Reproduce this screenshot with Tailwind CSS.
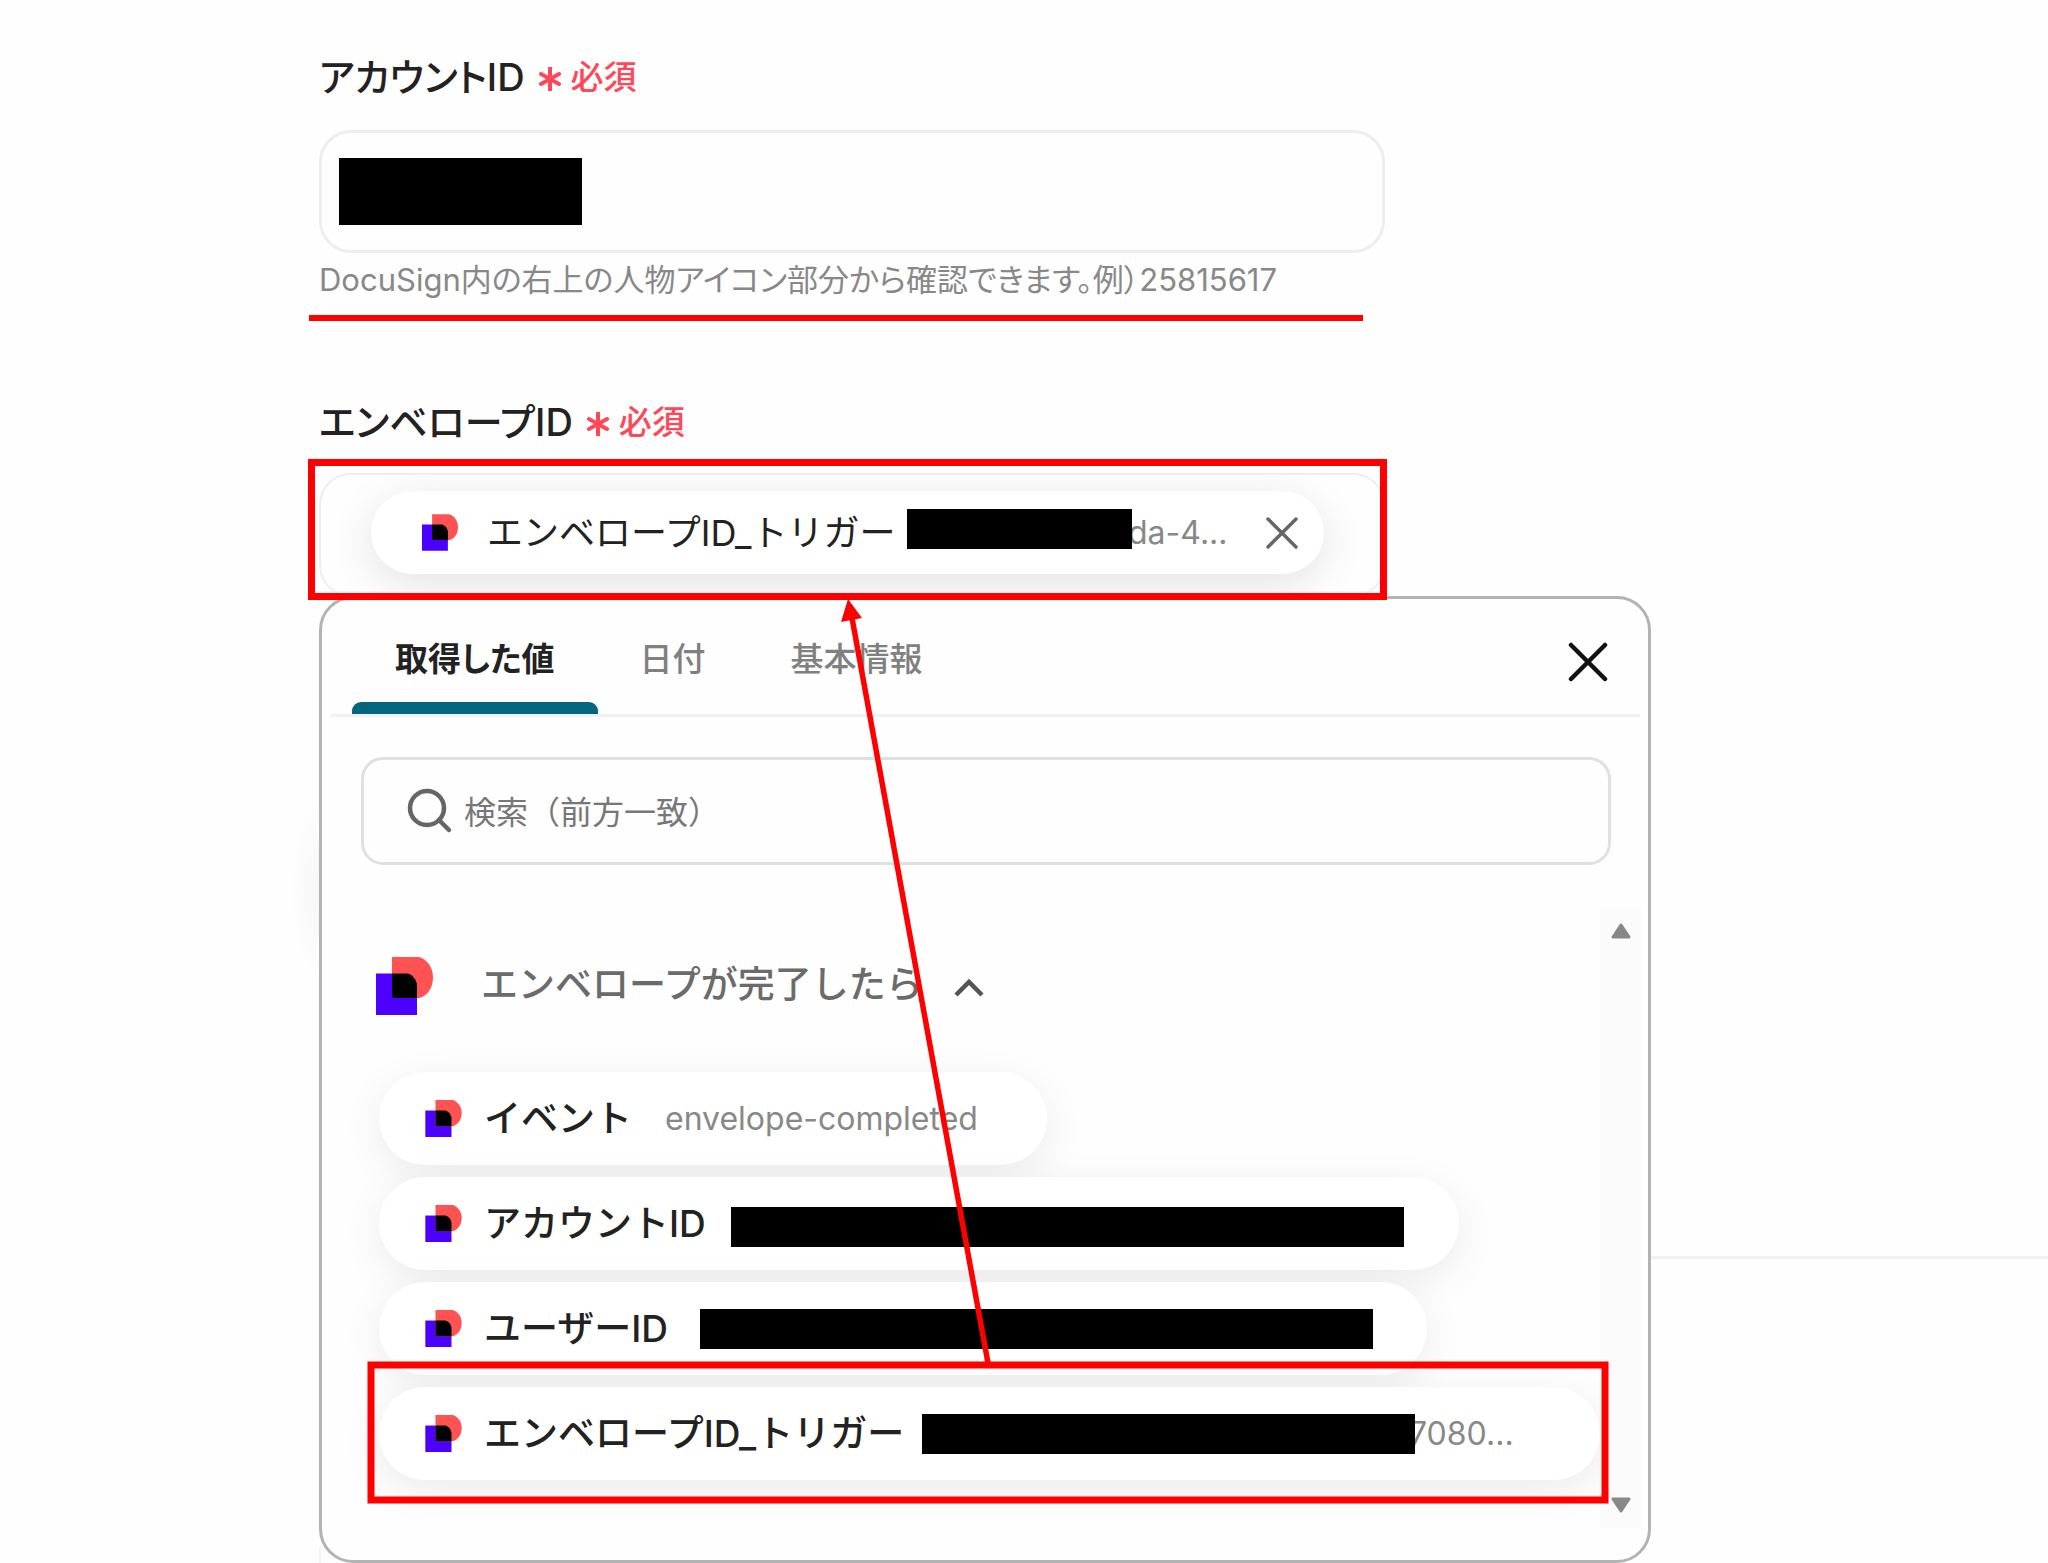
<!DOCTYPE html>
<html lang="ja">
<head>
<meta charset="utf-8">
<meta name="viewport" content="width=device-width, initial-scale=1">
<title>エンベロープID</title>
<script src="https://cdn.jsdelivr.net/npm/@tailwindcss/browser@4"></script>
</head>
<body class="bg-[#fefefe] font-['Inter','Noto_Sans_CJK_JP',sans-serif] text-[#222]">
<svg class="hidden" aria-hidden="true">
  <symbol id="logo" viewBox="0 0 57 58">
    <path fill="#4c00ff" d="M0 16.500h41V58H0z"/>
    <path fill="#ff5252" d="M16 0h27c9 3 14 11 14 20.500S52 39 43 41H16z"/>
    <path fill="#000" d="M16 16.500h16c5 2 8 6 9 11V41H16z"/>
  </symbol>
</svg>
<main class="relative overflow-hidden pt-[53px] pl-[319px]">
  <section class="max-w-[1066px]">
    <label for="account" class="flex items-center text-[38px] leading-[48px] font-medium [font-feature-settings:'palt']">アカウントID
      <svg class="mt-1 ml-[13px] size-6" viewBox="0 0 24 24" fill="none" stroke="#ff4757" stroke-width="4" stroke-linecap="round" aria-hidden="true"><path d="M12 1v22M3 7l18 10M21 7L3 17"/></svg>
      <span class="ml-[9px] text-[33px] text-[#ff4757]">必須</span>
    </label>
    <div class="mt-[29px] flex h-[123px] items-center rounded-[32px] border-3 border-[#eceef1] pl-[17px]">
      <span class="h-[67px] w-[243px] shrink-0 bg-black"></span>
      <input id="account" type="text" class="h-full min-w-0 flex-1 bg-transparent px-4 text-[32px] outline-none">
    </div>
    <p class="mt-[7px] text-[31px] leading-[40px] whitespace-nowrap text-[#888] [font-feature-settings:'palt']">DocuSign内の右上の人物アイコン部分から確認できます。例）25815617</p>
  </section>

  <section class="mt-[98px] max-w-[1066px]">
    <h2 class="flex items-center text-[38px] leading-[48px] font-medium [font-feature-settings:'palt']">エンベロープID
      <svg class="mt-1 ml-[13px] size-6" viewBox="0 0 24 24" fill="none" stroke="#ff4757" stroke-width="4" stroke-linecap="round" aria-hidden="true"><path d="M12 1v22M3 7l18 10M21 7L3 17"/></svg>
      <span class="ml-[9px] text-[33px] text-[#ff4757]">必須</span>
    </h2>
    <div class="mt-[27px] flex h-[124px] overflow-hidden rounded-[32px] border-2 border-[#eceef1] pt-4 pl-[50px]">
      <div class="flex h-[83px] w-[953px] items-center rounded-full bg-white pl-[51px] shadow-[0_10px_44px_rgba(0,0,0,0.11)]">
        <svg class="h-[37px] w-9 shrink-0"><use href="#logo"/></svg>
        <span class="ml-[29px] w-[420px] shrink-0 text-[36px] whitespace-nowrap">エンベロープID_トリガー</span>
        <span class="relative z-10 mb-2 h-10 w-[225px] shrink-0 bg-black"></span>
        <span class="-ml-1 text-[32px] text-[#888]">da-4...</span>
        <button type="button" aria-label="削除" class="mr-[26px] ml-auto"><svg class="size-8" viewBox="0 0 32 32" fill="none" stroke="#666" stroke-width="3.500" stroke-linecap="round"><path d="M2 2l28 28M30 2L2 30"/></svg></button>
      </div>
    </div>
  </section>

  <section class="relative -mt-px h-[967px] max-w-[1332px] rounded-[34px] border-3 border-[#b3b3b3] bg-[#fefefe]">
    <div class="mx-2 flex h-[118px] items-center border-b-3 border-[#f1f1f1] pl-[22px] text-[33px]" role="tablist">
      <button type="button" role="tab" aria-selected="true" class="relative h-[115px] px-[43px] pt-1.5 font-bold [font-feature-settings:'palt']">取得した値<span class="absolute inset-x-0 bottom-0 h-3 rounded-t-[9px] bg-[#05657e]"></span></button>
      <button type="button" role="tab" class="h-[115px] px-[42px] pt-1.5 font-medium text-[#808080]">日付</button>
      <button type="button" role="tab" class="h-[115px] px-[43px] pt-1.5 font-medium text-[#808080]">基本情報</button>
      <button type="button" aria-label="閉じる" class="mt-2.5 mr-8 ml-auto"><svg class="size-10" viewBox="0 0 40 40" fill="none" stroke="#111" stroke-width="4.500" stroke-linecap="round"><path d="M3 3l34 34M37 3L3 37"/></svg></button>
    </div>
    <label class="mt-10 mr-[37px] ml-[39px] flex h-[108px] items-center rounded-[22px] border-3 border-[#e0e0e0] pl-[43px]">
      <svg class="size-[46px] shrink-0" viewBox="0 0 46 46" fill="none" stroke="#666" stroke-width="4.500" stroke-linecap="round" aria-hidden="true"><circle cx="20" cy="20" r="17"/><path d="M32 32l10 10"/></svg>
      <input type="text" aria-label="検索" placeholder="検索（前方一致）" class="ml-[11px] h-full min-w-0 flex-1 bg-transparent pt-0.5 text-[32px] outline-none placeholder:text-[#777]">
    </label>
    <div class="mt-[43px] mr-[7px] flex h-[620px]">
      <div class="min-w-0 flex-1 overflow-hidden pt-[49px] pl-[54px]">
        <button type="button" class="flex h-[58px] items-center text-[37px] font-medium text-[#6b6b6b]">
          <svg class="h-[58px] w-[57px]"><use href="#logo"/></svg>
          <span class="mb-0.5 ml-12">エンベロープが完了したら</span>
          <svg class="mt-1 ml-[30px] h-5 w-8" viewBox="0 0 32 20" fill="none" stroke="#555" stroke-width="4.500" aria-hidden="true"><path d="M3 17L16 4l13 13"/></svg>
        </button>
        <ul class="mt-[57px] ml-[3px] flex flex-col items-start gap-3 text-[37px] font-medium [&>li]:flex [&>li]:h-[93px] [&>li]:items-center [&>li]:rounded-full [&>li]:bg-white [&>li]:pl-[46px] [&>li]:whitespace-nowrap [&>li]:shadow-[0_10px_40px_rgba(0,0,0,0.08)]">
          <li class="w-[668px]"><svg class="mr-[22px] size-[37px] shrink-0"><use href="#logo"/></svg><span class="w-[181px]">イベント</span><span class="text-[32px] font-normal text-[#888]">envelope-completed</span></li>
          <li class="w-[1080px]"><svg class="mr-[22px] size-[37px] shrink-0"><use href="#logo"/></svg><span class="w-[247px]">アカウントID</span><span class="mt-1.5 h-10 w-[673px] bg-black"></span></li>
          <li class="w-[1048px]"><svg class="mr-[22px] size-[37px] shrink-0"><use href="#logo"/></svg><span class="w-[216px]">ユーザーID</span><span class="h-10 w-[673px] bg-black"></span></li>
          <li class="w-[1221px]"><svg class="mr-[22px] size-[37px] shrink-0"><use href="#logo"/></svg><span class="w-[438px] shrink-0">エンベロープID_トリガー</span><span class="relative z-10 h-10 w-[493px] shrink-0 bg-black"></span><span class="-ml-1.5 text-[32px] font-normal text-[#888]">7080...</span></li>
        </ul>
      </div>
      <div class="flex w-[41px] flex-col items-center justify-between bg-[#fbfbfb] py-[15px]" aria-hidden="true">
        <svg class="h-4 w-5" viewBox="0 0 20 16"><path fill="#888" stroke="#888" stroke-width="3" stroke-linejoin="round" d="M10 2L2 14h16z"/></svg>
        <svg class="h-4 w-5" viewBox="0 0 20 16"><path fill="#888" stroke="#888" stroke-width="3" stroke-linejoin="round" d="M10 14L2 2h16z"/></svg>
      </div>
    </div>
  </section>
  <div class="absolute top-[1256px] right-0 left-[1651px] h-[3px] bg-[#f0f0f0]"></div>
  <div class="absolute bottom-0 left-[319px] h-4 w-0.5 bg-[#f3f3f3]"></div>
  <div class="absolute top-[800px] left-[291px] h-[180px] w-7 bg-radial-[at_100%_50%] from-black/3 to-transparent to-70%"></div>

  <svg class="pointer-events-none absolute inset-0 z-20 h-full w-full" fill="none" stroke="#f00" aria-hidden="true">
    <path stroke-width="6" d="M309 318h1054"/>
    <rect x="311.500" y="462.500" width="1072" height="134" stroke-width="7"/>
    <rect x="371" y="1365" width="1234" height="135" stroke-width="7"/>
    <path stroke-width="5.500" d="M988 1363L852 618"/>
    <path fill="#f00" stroke="none" d="M848 599l14 19-21 4z"/>
  </svg>
</main>
</body>
</html>
